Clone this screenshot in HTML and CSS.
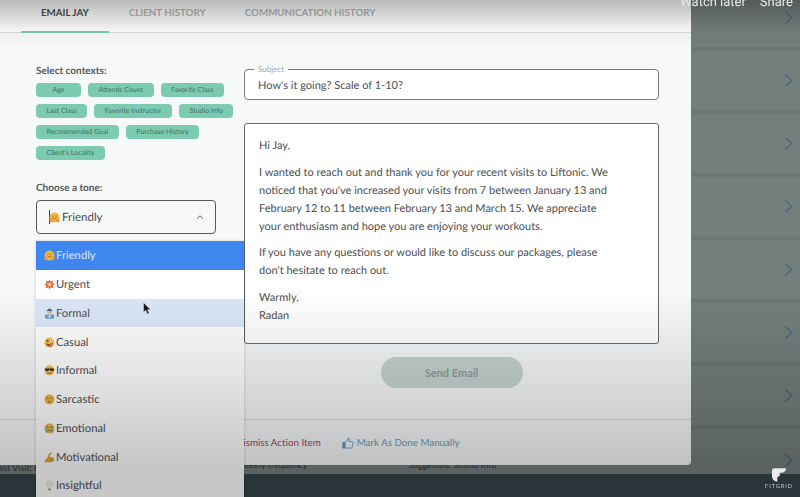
FILE: index.html
```html
<!DOCTYPE html>
<html lang="en">
<head>
    <meta charset="UTF-8">
    <meta name="viewport" content="width=device-width, initial-scale=1.0">
    <title>Email Jay</title>
    <link rel="stylesheet" href="styles.css">
</head>
<body>

<svg class="defs" width="0" height="0">
    <symbol id="chev" viewBox="0 0 10 16"><path d="M1.5 1.5 8.5 8l-7 6.5" fill="none" stroke="currentColor" stroke-width="1.8"/></symbol>
</svg>

<div class="backdrop">
    <div class="rows">
        <div class="row"><svg class="row-chev"><use href="#chev"/></svg></div>
        <div class="row"><svg class="row-chev"><use href="#chev"/></svg></div>
        <div class="row"><svg class="row-chev"><use href="#chev"/></svg></div>
        <div class="row"><svg class="row-chev"><use href="#chev"/></svg></div>
        <div class="row"><svg class="row-chev"><use href="#chev"/></svg></div>
        <div class="row"><svg class="row-chev"><use href="#chev"/></svg></div>
        <div class="row"><svg class="row-chev"><use href="#chev"/></svg></div>
        <div class="row row-last">
            <span class="row-meta">Last Visit: Liftonic</span>
            <span class="row-meta row-freq">Weekly frequency</span>
            <span class="row-meta row-goal">Suggested: Studio Info</span>
            <svg class="row-chev"><use href="#chev"/></svg>
        </div>
    </div>
    <div class="bottom-bar"></div>
</div>

<div class="modal">
    <div class="tabs">
        <div class="tab active">Email Jay</div>
        <div class="tab">Client History</div>
        <div class="tab">Communication History</div>
    </div>

    <div class="content">
        <div class="side">
            <div class="label">Select contexts:</div>
            <div class="chips">
                <span class="chip chip-age">Age</span>
                <span class="chip">Attends Count</span>
                <span class="chip">Favorite Class</span>
                <span class="chip">Last Class</span>
                <span class="chip">Favorite Instructor</span>
                <span class="chip">Studio Info</span>
                <span class="chip">Recommended Goal</span>
                <span class="chip">Purchase History</span>
                <span class="chip">Client's Locality</span>
            </div>

            <div class="label tone-label">Choose a tone:</div>
            <div class="tone-select">
                <span class="caret"></span>
                <svg class="emoji" viewBox="0 0 12 12"><circle cx="6" cy="6" r="5.4" fill="#f5b53f"/><path d="M3.5 4.5h1.5M7 4.5h1.5M4 6.5c1 1 3 1 4 0" stroke="#8a5a1c" stroke-width=".8" fill="none"/><circle cx="2.4" cy="9.2" r="2" fill="#ee9a34"/><circle cx="9.6" cy="9.2" r="2" fill="#ee9a34"/></svg>
                <span>Friendly</span>
                <svg class="select-chev" viewBox="0 0 10 6"><path d="M1.5 4.8 5 1.5l3.5 3.3" fill="none" stroke="#555" stroke-width="1.2"/></svg>

                <div class="tone-menu">
                    <div class="tone-item selected">
                        <svg class="emoji" viewBox="0 0 12 12"><circle cx="6" cy="6" r="5.4" fill="#f5b53f"/><path d="M3.5 4.5h1.5M7 4.5h1.5M4 6.5c1 1 3 1 4 0" stroke="#8a5a1c" stroke-width=".8" fill="none"/><circle cx="2.4" cy="9.2" r="2" fill="#ee9a34"/><circle cx="9.6" cy="9.2" r="2" fill="#ee9a34"/></svg>
                        Friendly
                    </div>
                    <div class="tone-item">
                        <svg class="emoji" viewBox="0 0 12 12"><path d="M6 .5 7.3 3 10 1.6 9.2 4.5l2.500 1.200-2.400 1.400.9 3-3-1.100L6 11.500 4.800 9 1.800 10.400l.8-3.200L.3 5.700l2.600-1.100L2 1.600 4.700 3Z" fill="#dc5b35"/><circle cx="6" cy="6" r="2.300" fill="#f3c68a"/></svg>
                        Urgent
                    </div>
                    <div class="tone-item hover">
                        <svg class="emoji" viewBox="0 0 12 12"><rect x="1" y="7" width="10" height="4.800" rx="1.500" fill="#6f9fc0"/><circle cx="6" cy="4" r="2.500" fill="#e6b77c"/><path d="M3 2.400 6 .4l3 2v1H3Z" fill="#4b6f8c"/><path d="M5.200 7h1.600l.2 4H5Z" fill="#dfe7ea"/></svg>
                        Formal
                        <svg class="pointer" viewBox="0 0 8 13"><path d="M.5.5v9.800l2.300-2 1.500 3.800 1.900-.8-1.600-3.600h3Z" fill="#1b1b1b" stroke="#e8eef6" stroke-width=".5"/></svg>
                    </div>
                    <div class="tone-item">
                        <svg class="emoji" viewBox="0 0 12 12"><circle cx="6" cy="6" r="5.400" fill="#f3bd45"/><circle cx="4" cy="4.300" r="1" fill="#5d3d17"/><circle cx="8.200" cy="3.800" r="1.400" fill="#fff"/><circle cx="8.200" cy="3.800" r=".6" fill="#5d3d17"/><path d="M2.600 6.800c2 1.600 5 1.200 6.800-.4-.2 2.600-2 4-3.600 4-1.700 0-3-1.600-3.200-3.600Z" fill="#7d4322"/><ellipse cx="7.200" cy="9.300" rx="1.800" ry="1.900" fill="#e8607c"/></svg>
                        Casual
                    </div>
                    <div class="tone-item">
                        <svg class="emoji" viewBox="0 0 12 12"><circle cx="6" cy="6" r="5.400" fill="#f3bd45"/><path d="M.9 3.800h10.200v1.100L9.800 6.600H7.300L6.400 5.100H5.600L4.700 6.600H2.200L.9 4.900Z" fill="#33302b"/><path d="M3.500 8.300c1.400 1 3.600 1 5 0" stroke="#5d3d17" stroke-width=".8" fill="none"/></svg>
                        Informal
                    </div>
                    <div class="tone-item">
                        <svg class="emoji" viewBox="0 0 12 12"><circle cx="6" cy="6" r="5.400" fill="#f1b33e"/><path d="M2.500 4.600h2.500M7 4.600h2.500M4.300 8.400h3.400" stroke="#8a5a1c" stroke-width=".9" fill="none"/></svg>
                        Sarcastic
                    </div>
                    <div class="tone-item">
                        <svg class="emoji" viewBox="0 0 12 12"><circle cx="6" cy="6" r="5.400" fill="#e3b648"/><path d="M2.800 4.300 5 5M9.200 4.300 7 5M4.200 8.600c1-.9 2.600-.9 3.600 0" stroke="#6e4a1d" stroke-width=".8" fill="none"/><path d="M1.500 6.500h2.600v4.200H2.600ZM7.900 6.500h2.600l-1.100 4.200H7.900Z" fill="#6fb3a4"/></svg>
                        Emotional
                    </div>
                    <div class="tone-item">
                        <svg class="emoji" viewBox="0 0 12 12"><path d="M.5 10.800c.2-2 1.400-2.700 3-4.300.8-1.500 1.300-3.200 2-5 .6-.6 2-.9 3-.7.6.4.5 1 .1 1.500-.7.4-1.300.4-1.800.5-.5 1-.4 2-.3 3 1.500-.8 3.300-.6 4.300.7.400 1.100.3 2.800-.3 4.100-3 .6-7 .7-10 .2Z" fill="#e8a52f"/></svg>
                        Motivational
                    </div>
                    <div class="tone-item">
                        <svg class="emoji" viewBox="0 0 12 12"><path d="M6 .5a3.900 3.900 0 0 0-2.400 7c.5.5.6 1 .6 1.500h3.600c0-.5.1-1 .6-1.500A3.900 3.900 0 0 0 6 .5Z" fill="#eeeeea" stroke="#d5d5cf" stroke-width=".4"/><rect x="4.500" y="9.300" width="3" height="2.200" rx=".7" fill="#9b9b98"/></svg>
                        Insightful
                    </div>
                </div>
            </div>
        </div>

        <div class="editor">
            <fieldset class="subject">
                <legend>Subject</legend>
                <div class="subject-text">How's it going? Scale of 1-10?</div>
            </fieldset>
            <div class="message">
                <p>Hi Jay,</p>
                <p>I wanted to reach out and thank you for your recent visits to Liftonic. We noticed that you've increased your visits from 7 between January 13 and February 12 to 11 between February 13 and March 15. We appreciate your enthusiasm and hope you are enjoying your workouts.</p>
                <p>If you have any questions or would like to discuss our packages, please don't hesitate to reach out.</p>
                <p>Warmly,<br>Radan</p>
            </div>
            <div class="send-row">
                <button class="send-btn">Send Email</button>
            </div>
        </div>
    </div>

    <div class="actions">
        <span class="dismiss">Dismiss Action Item</span>
        <span class="mark">
            <svg class="thumb" viewBox="0 0 13 13"><path d="M.8 6h2.600v6H.8Z" fill="#6a9dbd" stroke="#6a9dbd" stroke-linejoin="round"/><path d="M3.400 6.200 6 3.400 6.700 1c1 0 1.500.8 1.300 1.900L7.600 5h3.500c.9 0 1.300.8 1 1.500l-1.200 4.700c-.2.6-.6.8-1.200.8H3.400" fill="none" stroke="#6a9dbd"/></svg>
            Mark As Done Manually
        </span>
    </div>
</div>

<div class="shade"></div>

<div class="player-links">
    <span>Watch later</span>
    <span>Share</span>
</div>

<div class="brand">
    <svg class="brand-mark" viewBox="0 0 14 14"><path d="M0 2.500C0 1 1 .2 2.500.2H14c0 2.500-2 4.500-4.500 4.500H7.800v3.200c-1.500 0-2.500 1-2.500 2.500V13.500C2.200 13.500 0 11 0 8Z" fill="#e8ecec"/></svg>
    <span class="brand-name">FITGRID</span>
</div>

</body>
</html>
```

FILE: styles.css
```css
* {
    box-sizing: border-box;
}
html, body {
    margin: 0;
    height: 100%;
}
body {
    position: relative;
    width: 800px;
    height: 497px;
    overflow: hidden;
    font-family: 'Lato', 'Liberation Sans', sans-serif;
    text-rendering: geometricPrecision;
    color: #4c4f50;
}
.defs {
    position: absolute;
}

/* page behind the modal */
.backdrop {
    height: 497px;
    display: flex;
    flex-direction: column;
    background-color: #747f7d;
}
.rows {
    flex: 1;
    overflow: hidden;
    margin-top: -12px;
}
.row {
    height: 63px;
    display: flex;
    align-items: center;
    justify-content: flex-end;
    padding-right: 7px;
    border-bottom: 4px solid #6d7876;
    color: #4f6a7c;
}
.row-chev {
    width: 9px;
    height: 15px;
}
.row-last {
    position: relative;
    border-bottom: 0;
}
.row-meta {
    position: absolute;
    left: -6px;
    top: 33px;
    font-size: 9px;
    color: #2f3536;
}
.row-freq {
    left: 236px;
    top: 30px;
}
.row-goal {
    left: 408px;
    top: 30px;
}
.bottom-bar {
    height: 23px;
    background-color: #37454a;
}

/* modal */
.modal {
    position: absolute;
    left: 0;
    top: 0;
    width: 691px;
    height: 465px;
    display: flex;
    flex-direction: column;
    background-color: #f6f8f9;
    border-radius: 0 0 4px 0;
}
.tabs {
    height: 33px;
    flex-shrink: 0;
    display: flex;
    padding-left: 21px;
    gap: 20px;
    background-color: #fff;
    border-bottom: 1px solid #d8dbdb;
}
.tab {
    height: 33px;
    padding: 6px 20px 0;
    line-height: 14px;
    font-size: 9.750px;
    font-weight: 700;
    text-transform: uppercase;
    color: #b4b8b8;
}
.tab.active {
    color: #4c4f50;
    border-bottom: 2px solid #7ccbb0;
}
.tab + .tab {
    padding: 6px 0 0;
}
.tab + .tab + .tab {
    margin-left: 19px;
}
.content {
    flex: 1;
    display: flex;
    padding: 31px 32px 0 36px;
    gap: 9px;
}
.side {
    width: 199px;
    flex-shrink: 0;
    padding-top: 1px;
}
.label {
    font-size: 10px;
    font-weight: 700;
    line-height: 12px;
    color: #55595a;
}
.chips {
    display: flex;
    flex-wrap: wrap;
    gap: 7px;
    margin-top: 6px;
    width: 200px;
}
.chip {
    height: 14px;
    line-height: 14px;
    padding: 0 10.500px;
    font-size: 7px;
    color: #42705f;
    background-color: #7ccbb0;
    border-radius: 4px;
}
.chip-age {
    padding: 0 16.500px;
}
.tone-label {
    margin-top: 22px;
}
.tone-select {
    position: relative;
    width: 180px;
    height: 34px;
    margin-top: 6px;
    display: flex;
    align-items: center;
    padding-left: 12px;
    font-size: 11.500px;
    background-color: #f6f8f9;
    border: 1px solid #55595a;
    border-radius: 4px;
}
.caret {
    width: 1px;
    height: 14px;
    background-color: #444;
    margin-right: -1px;
}
.emoji {
    width: 11px;
    height: 11px;
    margin-right: 2px;
    flex-shrink: 0;
}
.select-chev {
    position: absolute;
    right: 11px;
    top: 13px;
    width: 8px;
    height: 6px;
}
.tone-menu {
    position: absolute;
    left: -1px;
    top: 40px;
    width: 208px;
    background-color: #fff;
    box-shadow: 0 0 3px rgba(0, 0, 0, 0.2);
    z-index: 2;
}
.tone-item {
    position: relative;
    height: 28.750px;
    display: flex;
    align-items: center;
    padding: 1px 0 0 8px;
    font-size: 11.250px;
}
.tone-item .emoji {
    margin-right: 1px;
}
.tone-item.selected {
    background-color: #3f86ef;
    color: #dde8f8;
}
.tone-item.hover {
    background-color: #dce8f8;
}
.pointer {
    position: absolute;
    left: 107px;
    top: 3px;
    width: 8px;
    height: 13px;
}
.editor {
    flex: 1;
    display: flex;
    flex-direction: column;
}
.subject {
    height: 36px;
    margin: 0;
    padding: 0 13px;
    background-color: #fff;
    border: 1px solid #777b7c;
    border-radius: 4px;
    min-width: 0;
}
.subject legend {
    padding: 0 4px;
    margin-left: -4px;
    font-size: 8px;
    line-height: 10px;
    color: #a3a7a7;
}
.subject-text {
    font-size: 11px;
    line-height: 16px;
    margin-top: 4px;
}
.message {
    height: 221px;
    margin-top: 23px;
    padding: 13px 38px 12px 14px;
    font-size: 11px;
    line-height: 18px;
    background-color: #fff;
    border: 1px solid #66696a;
    border-radius: 3px;
}
.message p {
    margin: 0 0 8.500px;
}
.send-row {
    display: flex;
    justify-content: center;
    margin-top: 13px;
}
.send-btn {
    width: 142px;
    height: 31px;
    border: none;
    border-radius: 16px;
    font-family: inherit;
    font-size: 11px;
    font-weight: 700;
    color: #8f9d9a;
    background-color: #c6d4d1;
}
.actions {
    height: 46px;
    flex-shrink: 0;
    display: flex;
    align-items: center;
    gap: 21px;
    padding-left: 236px;
    font-size: 9.750px;
    border-top: 1px solid #d8dbdb;
}
.dismiss {
    color: #a9455f;
}
.mark {
    display: flex;
    align-items: center;
    gap: 3px;
    color: #6a9dbd;
}
.thumb {
    width: 12px;
    height: 12px;
}

/* video player layer over everything */
.shade {
    position: absolute;
    inset: 0;
    z-index: 3;
    pointer-events: none;
    backdrop-filter: blur(0.35px);
    background: linear-gradient(to bottom, rgba(0, 0, 0, 0.27), rgba(0, 0, 0, 0.03) 32px, rgba(0, 0, 0, 0) 50px, rgba(0, 0, 0, 0) 290px, rgba(0, 0, 0, 0.22) 465px);
}
.player-links {
    position: absolute;
    right: 7px;
    top: -5px;
    z-index: 4;
    display: flex;
    gap: 14px;
    font-family: 'Roboto', sans-serif;
    font-size: 13px;
    line-height: 15px;
    color: #e6e8e8;
}
.brand {
    position: absolute;
    right: 7px;
    top: 468px;
    z-index: 4;
    display: flex;
    flex-direction: column;
    align-items: center;
}
.brand-mark {
    width: 14px;
    height: 14px;
}
.brand-name {
    margin-top: 2px;
    font-size: 5.500px;
    letter-spacing: 1px;
    line-height: 7px;
    color: #c9d0d0;
}
```
